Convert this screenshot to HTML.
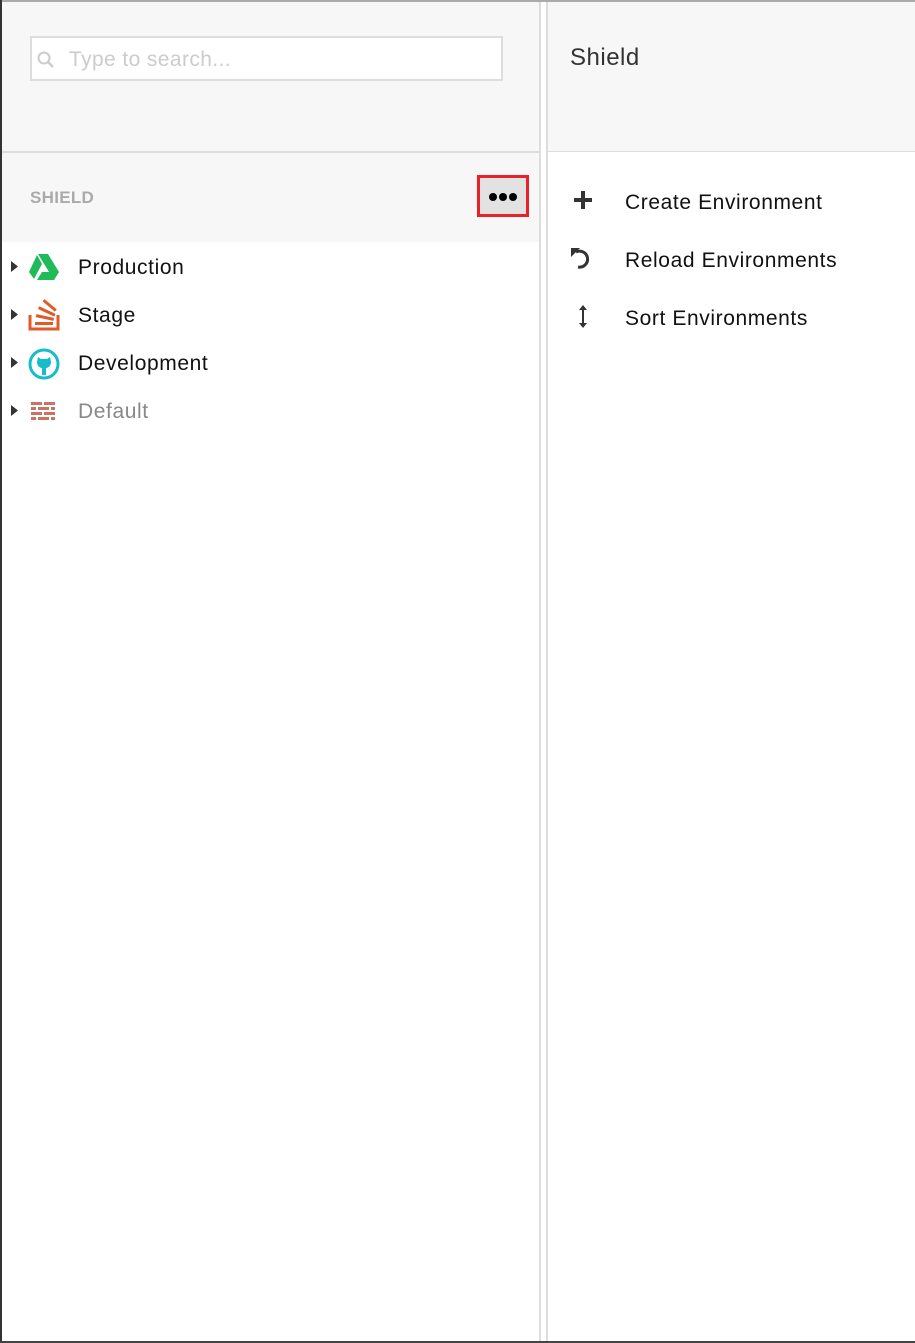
<!DOCTYPE html>
<html><head><style>
body{margin:0;width:915px;height:1343px;position:relative;background:#fff;font-family:"Liberation Sans",sans-serif;overflow:hidden}
.a{position:absolute}
.t{font-size:21px;letter-spacing:0.6px}
</style></head><body>
<div class="a" style="left:0;top:0;width:915px;height:2px;background:#aaa"></div>
<div class="a" style="left:0;top:0;width:2px;height:1343px;background:#333"></div>
<div class="a" style="left:0;top:1341px;width:915px;height:2px;background:#444"></div>
<div class="a" style="left:2px;top:2px;width:537px;height:150px;background:#f7f7f7"></div>
<div class="a" style="left:2px;top:151px;width:537px;height:2px;background:#ddd"></div>
<div class="a" style="left:2px;top:153px;width:537px;height:89px;background:#f7f7f7"></div>
<div class="a" style="left:539px;top:2px;width:2px;height:1339px;background:#ddd"></div>
<div class="a" style="left:546px;top:2px;width:2px;height:1339px;background:#ddd"></div>
<div class="a" style="left:548px;top:2px;width:367px;height:150px;background:#f7f7f7"></div>
<div class="a" style="left:548px;top:151px;width:367px;height:1px;background:#ddd"></div>
<div class="a" style="left:30px;top:36px;width:469px;height:41px;background:#fff;border:2px solid #ddd"></div>
<svg class="a" style="left:36px;top:50px" width="20" height="20"><circle cx="8" cy="8" r="5.5" fill="none" stroke="#ccc" stroke-width="2"/><line x1="12" y1="12" x2="17" y2="17" stroke="#ccc" stroke-width="2.5"/></svg>
<div class="a" style="left:69px;top:48px;font-size:21px;color:#ccc;letter-spacing:0.4px">Type to search...</div>
<div class="a" style="left:30px;top:188px;font-size:17px;font-weight:bold;color:#aaa;letter-spacing:0.3px">SHIELD</div>
<div class="a" style="left:477px;top:175px;width:46px;height:36px;background:#e2e2e2;border:3px solid #e8202a"></div>
<svg class="a" style="left:488px;top:192px" width="32" height="10"><circle cx="5" cy="5" r="4" fill="#000"/><circle cx="15" cy="5" r="4" fill="#000"/><circle cx="25" cy="5" r="4" fill="#000"/></svg>
<div class="a" style="left:570px;top:44px;font-size:24px;color:#333;letter-spacing:0.5px">Shield</div>
<!-- tree -->
<svg class="a" style="left:10px;top:260px" width="10" height="170"><path d="M1 1 L8 6.5 L1 12Z" fill="#333"/><path d="M1 49 L8 54.5 L1 60Z" fill="#333"/><path d="M1 97 L8 102.5 L1 108Z" fill="#333"/><path d="M1 145 L8 150.5 L1 156Z" fill="#333"/></svg>
<svg class="a" style="left:28px;top:253px" width="32" height="28"><path d="M10 1 L20 1 L31 19 L26 27 Z" fill="#1fba5a"/><path d="M9 2 L14 11 L6 26 L1 19Z" fill="#1fba5a"/><path d="M9 27 L14 19 L30 19 L26 27Z" fill="#1fba5a"/></svg>
<svg class="a" style="left:28px;top:299px" width="32" height="32"><path d="M2 16 V30 H30 V16" fill="none" stroke="#e05a2a" stroke-width="3"/><rect x="7" y="23" width="18" height="3" fill="#e05a2a"/><rect x="8" y="17" width="18" height="3" fill="#e05a2a" transform="rotate(12 17 18)"/><rect x="10" y="11" width="18" height="3" fill="#e05a2a" transform="rotate(25 19 12)"/><rect x="14" y="5" width="16" height="3" fill="#e05a2a" transform="rotate(40 22 6)"/></svg>
<svg class="a" style="left:28px;top:348px" width="32" height="32"><circle cx="16" cy="16" r="14" fill="none" stroke="#17bccb" stroke-width="3"/><path d="M10 9 L13 11 H19 L22 9 L23 14 C23 18 20 20 18 20 V27 H14 V20 C12 20 9 18 9 14Z" fill="#17bccb"/></svg>
<svg class="a" style="left:31px;top:402px" width="26" height="18"><g fill="#c97367"><rect x="0" y="0" width="11" height="3"/><rect x="13" y="0" width="11" height="3"/><rect x="0" y="5" width="5" height="3"/><rect x="7" y="5" width="11" height="3"/><rect x="20" y="5" width="4" height="3"/><rect x="0" y="10" width="11" height="3"/><rect x="13" y="10" width="11" height="3"/><rect x="0" y="15" width="5" height="3"/><rect x="7" y="15" width="11" height="3"/><rect x="20" y="15" width="4" height="3"/></g></svg>
<div class="a t" style="left:78px;top:256px;color:#111">Production</div>
<div class="a t" style="left:78px;top:304px;color:#111">Stage</div>
<div class="a t" style="left:78px;top:352px;color:#111">Development</div>
<div class="a t" style="left:78px;top:400px;color:#888">Default</div>
<!-- actions -->
<svg class="a" style="left:574px;top:191px" width="20" height="20"><rect x="0" y="7" width="18" height="4" fill="#333"/><rect x="7" y="0" width="4" height="18" fill="#333"/></svg>
<svg class="a" style="left:570px;top:246px" width="26" height="26"><path d="M6 6 A8 8 0 1 1 8 21" fill="none" stroke="#333" stroke-width="3"/><path d="M1 2 L10 2 L1 11Z" fill="#333"/></svg>
<svg class="a" style="left:577px;top:305px" width="12" height="24"><line x1="6" y1="3" x2="6" y2="20" stroke="#333" stroke-width="2"/><path d="M2 5 L6 0 L10 5Z M2 18 L6 23 L10 18Z" fill="#333"/></svg>
<div class="a t" style="left:625px;top:191px;color:#111">Create Environment</div>
<div class="a t" style="left:625px;top:249px;color:#111">Reload Environments</div>
<div class="a t" style="left:625px;top:307px;color:#111">Sort Environments</div>
</body></html>
